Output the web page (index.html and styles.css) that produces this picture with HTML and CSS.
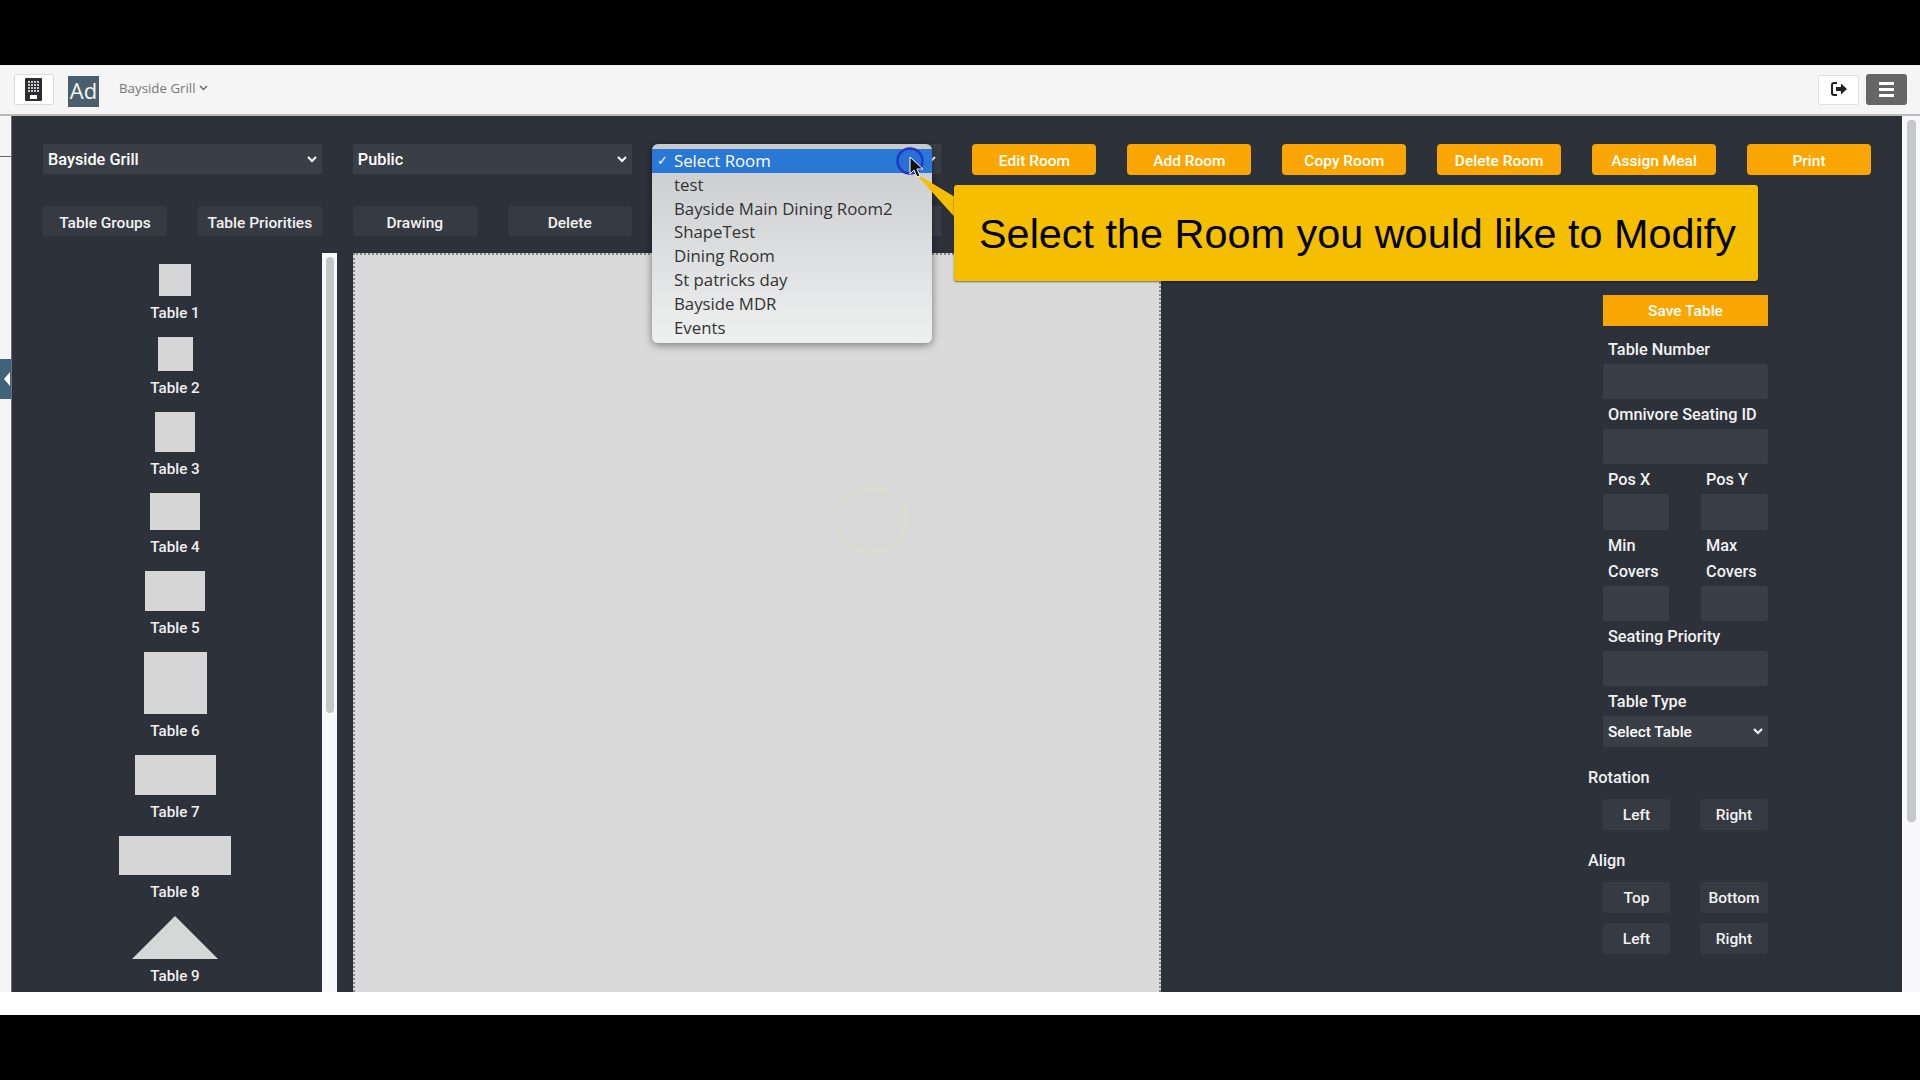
FILE: index.html
```html
<!DOCTYPE html>
<html lang="en">
<head>
  <meta charset="UTF-8" />
  <title>Room Editor</title>
  <link rel="stylesheet" href="styles.css">
</head>
<body>
  <div class="app">
    <header class="topbar">
      <div class="brand-btn">
        <svg width="17" height="23" viewBox="0 0 17 23">
          <rect width="17" height="23" rx="1" fill="#2b2d31"/>
          <g fill="#c9cbce">
            <rect x="3" y="3" width="2" height="2"/><rect x="6" y="3" width="2" height="2"/><rect x="9" y="3" width="2" height="2"/><rect x="12" y="3" width="2" height="2"/>
            <rect x="3" y="6" width="2" height="2"/><rect x="6" y="6" width="2" height="2"/><rect x="9" y="6" width="2" height="2"/><rect x="12" y="6" width="2" height="2"/>
            <rect x="3" y="9" width="2" height="2"/><rect x="6" y="9" width="2" height="2"/><rect x="9" y="9" width="2" height="2"/><rect x="12" y="9" width="2" height="2"/>
            <rect x="3" y="12" width="2" height="2"/><rect x="6" y="12" width="2" height="2"/><rect x="9" y="12" width="2" height="2"/><rect x="12" y="12" width="2" height="2"/>
          </g>
          <rect x="5" y="17" width="7" height="4" fill="#fff"/>
        </svg>
      </div>
      <div class="avatar">Ad</div>
      <div class="venue">Bayside Grill
        <svg width="9" height="6" viewBox="0 0 9 6"><path d="M1 1l3.5 3.5L8 1" fill="none" stroke="#666" stroke-width="1.5"/></svg>
      </div>
      <div class="topbar-right">
        <button class="logout-btn">
          <svg width="16" height="14" viewBox="0 0 16 14">
            <path d="M6 1H3a2 2 0 0 0-2 2v8a2 2 0 0 0 2 2h3" fill="none" stroke="#222" stroke-width="2"/>
            <path d="M5 5h5V1.5L16 7l-6 5.500V9H5z" fill="#222"/>
          </svg>
        </button>
        <button class="menu-btn"><span></span><span></span><span></span></button>
      </div>
    </header>

    <div class="main">
      <div class="rail">
        <div class="rail-line"></div>
        <div class="rail-tab"></div>
      </div>

      <div class="panel">
        <div class="toolbar">
          <div class="select wide"><span>Bayside Grill</span><svg class="chev" width="10" height="7" viewBox="0 0 10 7"><path d="M1 1l4 4 4-4" fill="none" stroke="#fff" stroke-width="2"/></svg></div>
          <div class="select wide"><span>Public</span><svg class="chev" width="10" height="7" viewBox="0 0 10 7"><path d="M1 1l4 4 4-4" fill="none" stroke="#fff" stroke-width="2"/></svg></div>
          <div class="select wide"><span></span><svg class="chev" width="10" height="7" viewBox="0 0 10 7"><path d="M1 1l4 4 4-4" fill="none" stroke="#fff" stroke-width="2"/></svg></div>
          <button class="btn-orange">Edit Room</button>
          <button class="btn-orange">Add Room</button>
          <button class="btn-orange">Copy Room</button>
          <button class="btn-orange">Delete Room</button>
          <button class="btn-orange">Assign Meal</button>
          <button class="btn-orange">Print</button>

          <button class="btn-dark">Table Groups</button>
          <button class="btn-dark">Table Priorities</button>
          <button class="btn-dark">Drawing</button>
          <button class="btn-dark">Delete</button>
          <div class="select wide"></div>
        </div>

        <div class="workspace">
          <div class="table-list">
            <div class="table-item"><div class="shape t1"></div><p>Table 1</p></div>
            <div class="table-item"><div class="shape t2"></div><p>Table 2</p></div>
            <div class="table-item"><div class="shape t3"></div><p>Table 3</p></div>
            <div class="table-item"><div class="shape t4"></div><p>Table 4</p></div>
            <div class="table-item"><div class="shape t5"></div><p>Table 5</p></div>
            <div class="table-item"><div class="shape t6"></div><p>Table 6</p></div>
            <div class="table-item"><div class="shape t7"></div><p>Table 7</p></div>
            <div class="table-item"><div class="shape t8"></div><p>Table 8</p></div>
            <div class="table-item"><div class="triangle"></div><p>Table 9</p></div>
          </div>
          <div class="list-scroll"><div class="list-thumb"></div></div>

          <div class="canvas">
            <svg class="ring" width="80" height="80" viewBox="0 0 80 80">
              <path d="M10 24C18 8 44 4 56 14M70 22c4 16 2 34-10 44-14 8-34 8-48-2-6-6-8-12-6-20" fill="none" stroke="#e3e4bd" stroke-width="3"/>
            </svg>
          </div>

          <div class="side">
            <div class="fields">
              <label class="under-callout">Table Options</label>
              <button class="btn-save">Save Table</button>
              <label>Table Number</label>
              <input type="text">
              <label>Omnivore Seating ID</label>
              <input type="text">
              <div class="pair">
                <div><label>Pos X</label><input class="tall" type="text"></div>
                <div><label>Pos Y</label><input class="tall" type="text"></div>
              </div>
              <div class="pair">
                <div><label>Min Covers</label><input type="text"></div>
                <div><label>Max Covers</label><input type="text"></div>
              </div>
              <label>Seating Priority</label>
              <input type="text">
              <label>Table Type</label>
              <div class="select small"><span>Select Table</span><svg class="chev" width="10" height="7" viewBox="0 0 10 7"><path d="M1 1l4 4 4-4" fill="none" stroke="#fff" stroke-width="2"/></svg></div>
            </div>

            <h4>Rotation</h4>
            <div class="btn-grid">
              <button class="btn-dark">Left</button>
              <button class="btn-dark">Right</button>
            </div>
            <h4>Align</h4>
            <div class="btn-grid">
              <button class="btn-dark">Top</button>
              <button class="btn-dark">Bottom</button>
              <button class="btn-dark">Left</button>
              <button class="btn-dark">Right</button>
            </div>
          </div>
        </div>
      </div>

      <div class="page-scroll"><div class="page-thumb"></div></div>

      <!-- open room dropdown and tutorial overlay -->
      <ul class="room-menu">
        <li class="selected">Select Room</li>
        <li>test</li>
        <li>Bayside Main Dining Room2</li>
        <li>ShapeTest</li>
        <li>Dining Room</li>
        <li>St patricks day</li>
        <li>Bayside MDR</li>
        <li>Events</li>
      </ul>
      <svg class="tail" width="50" height="60" viewBox="0 0 50 60">
        <path d="M0 0L45 27V50z" fill="#f5bf00"/>
      </svg>
      <div class="callout">Select the Room you would like to Modify</div>
      <svg class="pointer" width="34" height="38" viewBox="0 0 34 38">
        <circle cx="15" cy="14" r="12.500" fill="#2a6fd6" stroke="#2236c8" stroke-width="2.500"/>
        <path d="M15 10v17l4-4 3 7 3-1-3-7h6z" fill="#111" stroke="#fff" stroke-width="1"/>
      </svg>
    </div>
  </div>
</body>
</html>
```

FILE: styles.css
```css
* { box-sizing: border-box; }

body {
  margin: 0;
  height: 1080px;
  overflow: hidden;
  background: #000;
  padding: 65px 0;
  font-family: Roboto, sans-serif;
  font-weight: 500;
  color: #fff;
}

.app {
  height: 950px;
  background: #fff;
  display: flex;
  flex-direction: column;
}

/* top bar */

.topbar {
  height: 51px;
  flex: none;
  background: #f5f5f5;
  border-bottom: 2px solid #b9babc;
  display: flex;
  align-items: flex-start;
  padding: 9px 13px 0 14px;
}

.brand-btn {
  width: 40px;
  height: 31px;
  padding-right: 2px;
  background: #fff;
  border: 1px solid #dcdcdc;
  border-radius: 2px;
  display: flex;
  align-items: center;
  justify-content: center;
}

.avatar {
  width: 31px;
  height: 31px;
  margin: 2px 0 0 14px;
  background: #4a5f6b;
  color: #f2f4f5;
  font-family: "Open Sans", sans-serif;
  font-weight: 400;
  font-size: 22px;
  line-height: 29px;
  text-align: center;
}

.venue {
  margin: 5px 0 0 20px;
  font-family: "Open Sans", sans-serif;
  font-weight: 400;
  font-size: 13.300px;
  color: #777;
  display: flex;
  align-items: center;
  gap: 3px;
}

.topbar-right {
  margin-left: auto;
  display: flex;
  gap: 7px;
}

.logout-btn {
  width: 41px;
  height: 30px;
  margin-top: 1px;
  padding: 0;
  background: #fff;
  border: 1px solid #e0e0e0;
  border-radius: 2px;
}

.menu-btn {
  width: 41px;
  height: 31px;
  padding: 0;
  background: #666;
  border: none;
  border-radius: 3px;
  display: flex;
  flex-direction: column;
  align-items: center;
  justify-content: center;
  gap: 3px;
}

.menu-btn span {
  width: 15px;
  height: 3px;
  background: #fff;
}

/* main area */

.main {
  position: relative;
  height: 876px;
  flex: none;
  display: flex;
  align-items: flex-start;
}

.rail {
  position: relative;
  width: 11px;
  height: 100%;
  background: #f5f5f5;
}

.rail-line {
  position: absolute;
  top: 40px;
  left: 0;
  width: 11px;
  height: 1px;
  background: #666;
}

.rail-tab {
  position: absolute;
  top: 243px;
  left: 0;
  width: 11px;
  height: 40px;
  background: #3f6378;
}

.rail-tab::after {
  content: "";
  position: absolute;
  top: 13px;
  left: 4px;
  border-style: solid;
  border-width: 7px 6px 7px 0;
  border-color: transparent #fff transparent transparent;
}

.panel {
  width: 1891px;
  height: 876px;
  background: #2d313a;
  box-shadow: inset 1px 0 #6d6d7a;
  padding: 28px 31px 0 32px;
  overflow: hidden;
}

.toolbar {
  display: grid;
  grid-template-columns: repeat(12, 1fr);
  column-gap: 31px;
  row-gap: 31px;
  width: 1828px;
}

.select {
  display: flex;
  align-items: center;
  justify-content: space-between;
  height: 30px;
  padding: 0 5px 0 5px;
  background: #3a3f47;
  font-size: 16.300px;
}

.select.wide {
  grid-column: span 2;
}

.select.small {
  height: 31px;
  border-radius: 2px;
}

.btn-orange {
  height: 31px;
  padding: 2px 0 0;
  background: #f9a602;
  border: none;
  border-radius: 4px;
  color: #fff;
  font: 500 15.500px Roboto, sans-serif;
}

.btn-dark {
  height: 30px;
  padding: 3px 0 0;
  background: #363b43;
  border: none;
  border-radius: 3px;
  color: #f2f2f2;
  font: 500 15.500px Roboto, sans-serif;
}

.workspace {
  display: flex;
  height: 739px;
  margin-top: 17px;
}

/* table shapes */

.table-list {
  width: 279px;
  padding: 11px 15px 0 0;
  overflow: hidden;
}

.table-item {
  display: flex;
  flex-direction: column;
  align-items: center;
  margin-bottom: 15px;
}

.table-item p {
  margin: 6px 0 0;
  height: 20px;
  line-height: 22px;
  font-size: 15.200px;
  color: #f0f0f0;
}

.shape {
  background: #d6d6d7;
}

.t1 { width: 32px; height: 32px; }
.t2 { width: 35px; height: 34px; }
.t3 { width: 40px; height: 40px; }
.t4 { width: 50px; height: 37px; }
.t5 { width: 60px; height: 40px; }
.t6 { width: 63px; height: 62px; }
.t7 { width: 81px; height: 40px; }
.t8 { width: 112px; height: 39px; }

.triangle {
  width: 0;
  height: 0;
  border-style: solid;
  border-width: 0 43px 43px;
  border-color: transparent transparent #d6d8d8;
}

.list-scroll {
  width: 15px;
  flex: none;
  background: #f9f9fb;
  padding: 4px 3.500px 0 4px;
}

.list-thumb {
  height: 456px;
  background: #c5c6c8;
  border-radius: 4px;
}

.canvas {
  position: relative;
  width: 808px;
  margin-left: 16px;
  height: 100%;
  background: #d9dad9;
  border: 2px dotted #85878a;
  border-bottom: none;
}

.ring {
  position: absolute;
  top: 225px;
  left: 479px;
  opacity: 0.35;
}

/* right column form */

.side {
  width: 180px;
  margin-left: 427px;
  flex: none;
}

.fields {
  padding: 10px 0 0 15px;
}

.fields label {
  display: block;
  height: 26px;
  padding-left: 5px;
  line-height: 28px;
  font-size: 16.300px;
  color: #f2f2f2;
}

.fields .under-callout {
  line-height: 19px;
}

.pair label {
  height: auto;
  line-height: 26px;
  padding-top: 1px;
  margin-bottom: -1px;
}

.fields input {
  display: block;
  width: 100%;
  height: 35px;
  margin: 2px 0;
  padding: 0;
  background: #3a3e46;
  border: none;
  border-radius: 2px;
}

.fields input.tall {
  height: 36px;
}

.fields .select {
  margin-top: 2px;
  font-size: 15.400px;
}

.btn-save {
  display: block;
  width: 100%;
  height: 31px;
  margin: 6px 0 10px;
  padding: 0;
  background: #f9a602;
  border: none;
  color: #fff;
  font: 500 15.500px Roboto, sans-serif;
}

.pair {
  display: grid;
  grid-template-columns: 66px 67px;
  column-gap: 32px;
}

.side h4 {
  margin: 18px 0 8px;
  line-height: 26px;
  font-size: 16.300px;
  font-weight: 500;
  color: #f2f2f2;
}

.btn-grid {
  display: grid;
  grid-template-columns: 67px 68px;
  column-gap: 30px;
  row-gap: 10px;
  margin-left: 15px;
}

.btn-grid .btn-dark {
  height: 31px;
  padding-top: 1px;
}

/* page scrollbar */

.page-scroll {
  width: 18px;
  height: 876px;
  background: #f8f8fb;
  border-left: 1px solid #fff;
  padding: 4px 4px 0 4px;
}

.page-thumb {
  width: 9px;
  height: 702px;
  background: #c6c7c9;
  border-radius: 4px;
}

/* overlays */

.room-menu {
  position: absolute;
  top: 28px;
  left: 652px;
  width: 280px;
  height: 199px;
  margin: 0;
  padding: 5px 0 0;
  list-style: none;
  background: linear-gradient(#c7c9cb, #eff0f0);
  border-radius: 6px;
  box-shadow: 0 2px 8px rgba(0, 0, 0, 0.45);
  font-family: "Open Sans", sans-serif;
  font-weight: 400;
  font-size: 16.800px;
  color: #333;
}

.room-menu li {
  height: 23.800px;
  line-height: 23px;
  padding-left: 22px;
}

.room-menu .selected {
  position: relative;
  background: #2a78d6;
  color: #fff;
}

.room-menu .selected::before {
  content: "\2713";
  position: absolute;
  left: 5px;
  font-family: "DejaVu Sans", sans-serif;
  font-weight: 700;
  font-size: 13px;
}

.tail {
  position: absolute;
  top: 57px;
  left: 915px;
}

.callout {
  position: absolute;
  top: 69px;
  left: 954px;
  width: 804px;
  height: 96px;
  padding-left: 25px;
  background: #f5bf00;
  border-radius: 3px;
  box-shadow: 0 1px 2px rgba(0, 0, 0, 0.5);
  color: #000;
  font-family: "Liberation Sans", sans-serif;
  font-weight: 400;
  font-size: 41.400px;
  line-height: 99px;
  white-space: nowrap;
}

.pointer {
  position: absolute;
  top: 31px;
  left: 895px;
}
```
